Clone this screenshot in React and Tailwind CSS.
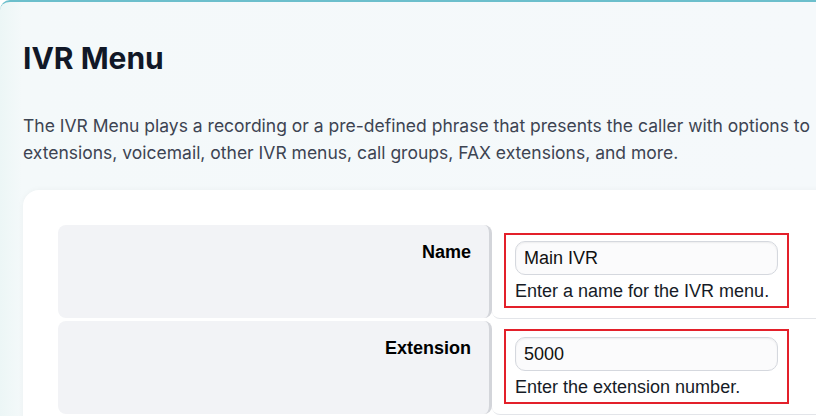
import React from 'react';

const fields = [
    { label: 'Name', value: 'Main IVR', help: 'Enter a name for the IVR menu.' },
    { label: 'Extension', value: '5000', help: 'Enter the extension number.' },
];

const FieldRow = ({ field }) => (
    <div className="flex mb-[2px]">
        {/* label cell */}
        <div className="w-[434px] h-[93px] shrink-0 rounded-lg bg-[#f2f3f6] border-r-[3px] border-[#d3d5da] pr-[18px] pt-[16px] text-right">
            <span className="text-[18px] leading-[21px] font-bold text-black">{field.label}</span>
        </div>
        {/* value cell */}
        <div className="flex-1 h-[94px] border-b border-[#e3e5e9] rounded-bl-lg pl-[12px] pt-[8px]">
            <div className="w-[285px] h-[75px] border-2 border-[#e3202a] px-[9px] pt-[6px]">
                <input
                    readOnly
                    value={field.value}
                    className="w-[263px] h-[34px] rounded-[10px] border border-[#d5d8de] bg-[#fbfbfc] shadow-[inset_0_1px_2px_rgba(0,0,0,0.06)] px-[8px] text-[18px] text-[#111] outline-none"
                    style={{ fontFamily: '"Liberation Sans", Arial, sans-serif' }}
                />
                <p className="mt-[3px] text-[18px] leading-[27px] text-[#161b26]">{field.help}</p>
            </div>
        </div>
    </div>
);

const App = () => {
    return (
        <div className="w-[816px] h-[416px] overflow-hidden bg-white">
            <div className="h-full rounded-tl-[10px] border-t-2 border-[#6cbfcc] bg-[linear-gradient(to_right,#ecf6f6,#f4f9fa_22px,#f5f9fb)] overflow-hidden">
                <div className="pt-[38px] px-[23px]" style={{ fontFamily: 'Inter, sans-serif' }}>
                    <h1 className="text-[30px] leading-[36px] font-bold text-[#111827]">IVR Menu</h1>
                    <p className="mt-[36px] text-[17.5px] leading-[27px] text-[#3d4452] whitespace-nowrap">
                        The IVR Menu plays a recording or a pre-defined phrase that presents the caller with options to
                        <br />
                        extensions, voicemail, other IVR menus, call groups, FAX extensions, and more.
                    </p>
                </div>

                {/* form card */}
                <div
                    className="mt-[24px] ml-[23px] w-[900px] h-[300px] rounded-tl-2xl bg-white shadow-[0_0_6px_rgba(0,0,0,0.04)] pt-[35px] pl-[35px]"
                    style={{ fontFamily: '"Liberation Sans", Arial, sans-serif' }}
                >
                    {fields.map((f) => (
                        <FieldRow key={f.label} field={f} />
                    ))}
                </div>
            </div>
        </div>
    );
};

export default App;
